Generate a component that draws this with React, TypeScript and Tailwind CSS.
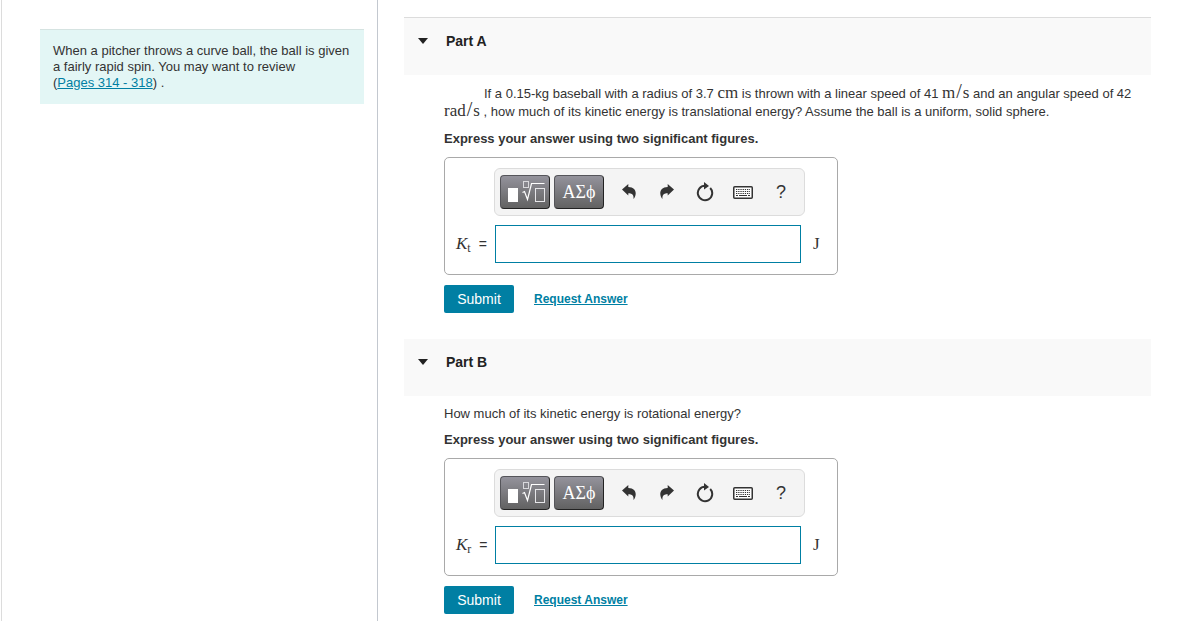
import { useState } from 'react'
import type { ReactNode } from 'react'

function Unit({ children }: { children: ReactNode }) {
  return <span className="font-['Liberation_Serif',serif] text-[17px] leading-0">{children}</span>
}

function PerSecond({ unit }: { unit: string }) {
  return (
    <Unit>
      {unit}
      <span className="px-px text-xl leading-0">/</span>s
    </Unit>
  )
}

function TemplateIcon() {
  return (
    <svg width="40" height="24" viewBox="0 0 40 24" fill="none" aria-hidden>
      <rect x="3" y="8" width="10" height="14" fill="#fff" />
      <rect x="18.5" y="1.5" width="5" height="6" stroke="#d9d9dd" />
      <path d="M17.5 12.5l2-1 3 8 4-16h13" stroke="#fff" strokeWidth="1.2" />
      <rect x="30.5" y="8.5" width="9" height="13" stroke="#e6e6e9" />
    </svg>
  )
}

function UndoIcon({ flipped = false }: { flipped?: boolean }) {
  return (
    <svg
      width="14"
      height="16"
      viewBox="0 0 14 16"
      className={flipped ? '-scale-x-100' : ''}
      aria-hidden
    >
      <path d="M0 5.500L6.300 0v3c5.200.2 7.700 3 7.400 6.800-.2 2.200-1 4-2.200 5.200.4-3.700-1-5.800-5.200-5.700v2.200z" fill="#333" />
    </svg>
  )
}

function ResetIcon() {
  return (
    <svg width="18" height="20" viewBox="0 0 18 20" fill="none" aria-hidden>
      <path d="M14.200 6a7.200 7.200 0 1 1-5.200-2.200h1" stroke="#333" strokeWidth="2" />
      <path d="M8 0l5 4-5 3.500z" fill="#333" />
    </svg>
  )
}

function KeyboardIcon() {
  return (
    <svg width="20" height="13" viewBox="0 0 20 13" fill="none" aria-hidden>
      <rect x=".75" y=".75" width="18.500" height="11.500" rx="1" fill="#fff" stroke="#333" strokeWidth="1.500" />
      <path d="M3 3.500h14M3 5.500h14M3 7.500h14" stroke="#333" strokeDasharray="1.300 .9" />
      <path d="M3 9.500h2M6 9.500h8M15 9.500h2" stroke="#333" />
    </svg>
  )
}

const tools = [
  { label: 'Undo', icon: <UndoIcon /> },
  { label: 'Redo', icon: <UndoIcon flipped /> },
  { label: 'Reset', icon: <ResetIcon /> },
  { label: 'Keyboard', icon: <KeyboardIcon /> },
  { label: 'Help', icon: <span className="text-lg leading-none">?</span> },
]

const paletteButton =
  'flex h-[34px] w-[50px] items-center justify-center rounded border border-[#55555a] border-r-[#222] border-b-[#222] bg-linear-to-b from-[#94939c] to-[#626262] text-white'

function Toolbar() {
  return (
    <div className="flex h-12 items-center rounded-md border border-[#dcdcdc] bg-[#f4f4f4] pl-[5px]">
      <div className="mr-[6px] flex gap-1">
        <button type="button" aria-label="Templates" className={paletteButton}>
          <TemplateIcon />
        </button>
        <button
          type="button"
          aria-label="Symbols"
          className={`${paletteButton} font-['Liberation_Serif',serif] text-lg`}
        >
          ΑΣϕ
        </button>
      </div>
      {tools.map((tool) => (
        <button
          key={tool.label}
          type="button"
          aria-label={tool.label}
          className="flex h-[34px] w-[38px] items-center justify-center text-[#333]"
        >
          {tool.icon}
        </button>
      ))}
    </div>
  )
}

interface PartProps {
  title: string
  subscript: string
  first?: boolean
  children: ReactNode
}

function Part({ title, subscript, first = false, children }: PartProps) {
  const [open, setOpen] = useState(true)
  const [answer, setAnswer] = useState('')
  const id = `answer-${subscript}`

  return (
    <section>
      <h2 className={`bg-[#f9f9f9] ${first ? 'border-t border-[#dcdcdc]' : ''}`}>
        <button
          type="button"
          aria-expanded={open}
          onClick={() => setOpen(!open)}
          className="flex h-[57px] w-full items-start pt-[13px] pl-[14px] text-sm leading-5 font-bold text-[#222]"
        >
          <svg width="10" height="6" viewBox="0 0 10 6" className="mt-[7px] mr-[18px]" aria-hidden>
            <path d="M0 0h10L5 6z" fill="#222" />
          </svg>
          {title}
        </button>
      </h2>

      {open && (
        <div className="pt-[10px] pl-10">
          {children}
          <p className="mt-[9px] leading-[18px] font-bold">
            Express your answer using two significant figures.
          </p>

          <div className="mt-[9px] grid w-fit grid-cols-[49px_311px_auto] items-center gap-y-[9px] rounded-[5px] border border-[#a9a9a9] pt-[10px] pr-[17px] pb-[11px]">
            <div className="col-start-2">
              <Toolbar />
            </div>
            <label
              htmlFor={id}
              className="col-start-1 row-start-2 flex items-baseline pl-[11px] font-['Liberation_Serif',serif] text-[17px]"
            >
              <span>
                <i>K</i>
                <sub className="text-xs">{subscript}</sub>
              </span>
              <span className="ml-2 font-['Liberation_Sans',sans-serif] text-sm">=</span>
            </label>
            <input
              id={id}
              type="text"
              value={answer}
              onChange={(e) => setAnswer(e.target.value)}
              className="row-start-2 ml-px h-[38px] w-[306px] border border-[#007fa3] bg-white px-2 text-base outline-none"
            />
            <span className="row-start-2 pl-2 font-['Liberation_Serif',serif] text-[17px]">J</span>
          </div>

          <div className="mt-[10px] flex items-center gap-5">
            <button
              type="button"
              className="h-7 w-[70px] rounded-xs bg-[#007fa3] text-sm text-white"
            >
              Submit
            </button>
            <a href="#request" className="text-xs font-bold text-[#007fa3] underline">
              Request Answer
            </a>
          </div>
        </div>
      )}
    </section>
  )
}

export default function App() {
  return (
    <div className="flex min-h-screen bg-white font-['Liberation_Sans',Arial,sans-serif] text-[13px] text-[#333]">
      <aside className="ml-px w-[377px] shrink-0 border-x border-l-[#dcdcdc] border-r-[#c3c8cf] pt-[29px] pr-[13px] pl-[38px]">
        <p className="border-t border-[#d5e3e1] bg-[#e3f6f5] px-[13px] pt-[13px] pb-[13px] leading-4">
          When a pitcher throws a curve ball, the ball is given a fairly rapid spin. You may want to
          review{' '}
          <span className="whitespace-nowrap">
            (
            <a href="#pages" className="text-[#007fa3] underline">
              Pages 314 - 318
            </a>
            ) .
          </span>
        </p>
      </aside>

      <main className="flex min-w-0 flex-1 flex-col gap-[26px] pt-[17px] pr-[51px] pl-[26px]">
        <Part title="Part A" subscript="t" first>
          <p className="indent-10 leading-[18px]">
            If a 0.15-kg baseball with a radius of 3.7 <Unit>cm</Unit> is thrown with a linear speed
            of 41 <PerSecond unit="m" /> and an angular speed of 42 <PerSecond unit="rad" /> , how
            much of its kinetic energy is translational energy? Assume the ball is a uniform, solid
            sphere.
          </p>
        </Part>
        <Part title="Part B" subscript="r">
          <p className="leading-4">How much of its kinetic energy is rotational energy?</p>
        </Part>
      </main>
    </div>
  )
}
